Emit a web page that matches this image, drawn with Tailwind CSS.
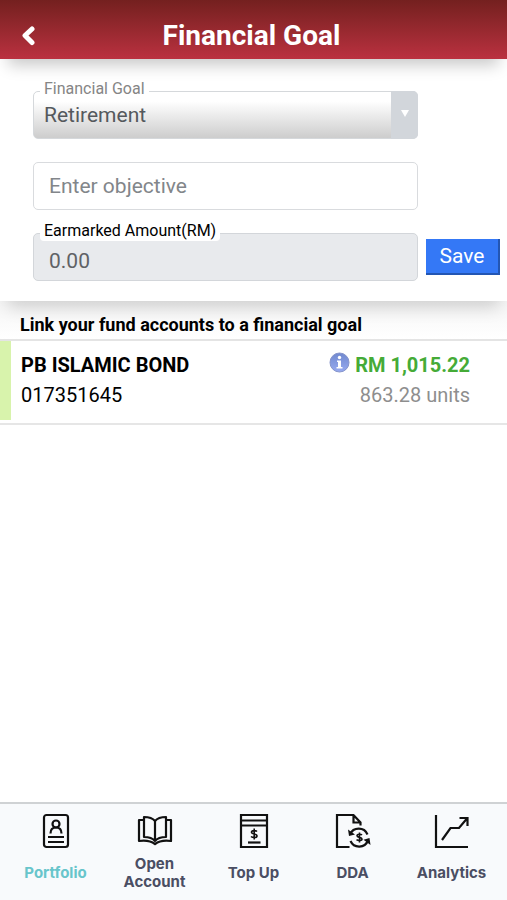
<!DOCTYPE html>
<html lang="en">
<head>
  <meta charset="UTF-8" />
  <meta name="viewport" content="width=device-width, initial-scale=1.0" />
  <title>Financial Goal</title>
  <script src="https://cdn.jsdelivr.net/npm/@tailwindcss/browser@4"></script>
</head>
<body class="min-h-screen flex flex-col bg-white text-black font-['Roboto',sans-serif]">
  <header class="relative z-20 h-[59px] grid grid-cols-[56px_1fr_60px] items-center pt-3 bg-linear-to-b from-[#74201f] to-[#bb3140] shadow-[0_14px_16px_-8px_rgba(0,0,0,0.22)]">
    <button type="button" aria-label="Back" class="flex justify-center">
      <svg class="w-5 h-5" viewBox="0 0 20 20" fill="none" stroke="#fff" stroke-width="5" stroke-linecap="round" stroke-linejoin="round"><path d="M14 3 7 9.500l7 7" /></svg>
    </button>
    <h1 class="text-[28px] leading-8 font-bold text-white text-center">Financial Goal</h1>
  </header>

  <form class="relative z-10 grid grid-cols-[1fr_74px] gap-x-2 gap-y-[23px] pt-8 pb-5 pl-[33px] pr-[7px] bg-white shadow-[0_14px_16px_-8px_rgba(0,0,0,0.16)]">
    <div class="relative col-start-1">
      <label for="goal" class="absolute left-[7px] -top-3 px-1 bg-white rounded text-base leading-5 text-[#858585]">Financial Goal</label>
      <select id="goal" class="block appearance-none w-full h-12 pl-[10px] pr-9 pt-[2px] border border-[#d5d8db] rounded-[5px] bg-linear-to-b from-white from-20% to-[#cdcdcd] text-[21px] text-[#55595d]">
        <option>Retirement</option>
      </select>
      <span class="absolute right-0 inset-y-0 w-[27px] flex items-center justify-center pb-1 rounded-r-[5px] bg-[#d2d6db] pointer-events-none">
        <svg class="w-2 h-2" viewBox="0 0 8 8" fill="#fff"><path d="M0 1h8L4 8z" /></svg>
      </span>
    </div>

    <input type="text" placeholder="Enter objective" aria-label="Objective" class="col-start-1 w-full h-12 px-[15px] border border-[#d9dbde] rounded-[5px] text-[21px] text-[#55595d] placeholder:text-[#82868a]" />

    <div class="relative col-start-1">
      <label for="amount" class="absolute left-[7px] -top-3 px-1 bg-white rounded text-base leading-5">Earmarked Amount(RM)</label>
      <input id="amount" type="text" value="0.00" readonly class="block w-full h-12 px-[15px] pt-2 border border-[#d3d6da] rounded-[5px] bg-[#e8eaed] text-[21px] text-[#5f6266]" />
    </div>
    <button type="submit" class="self-center h-9 border-r-2 border-b-2 border-[#2356b3] bg-[#3478f6] text-[21px] leading-none text-white">Save</button>
  </form>

  <main class="grow">
    <h2 class="h-10 pt-3 pl-5 border-b-2 border-[#e4e4e4] bg-linear-to-b from-[#f5f5f5] to-white text-lg leading-6 font-bold">Link your fund accounts to a financial goal</h2>
    <div class="flex justify-between border-b-2 border-[#e6e6e6] pb-[3px] text-[20px] leading-[30px]">
      <div class="h-[79px] pt-[9px] pl-[10px] border-l-[11px] border-[#d8f3ac]">
        <p class="font-bold">PB ISLAMIC BOND</p>
        <p>017351645</p>
      </div>
      <div class="pt-[9px] pr-[37px] text-right">
        <p class="flex items-center gap-[5px] font-bold text-[#45ab37]">
          <svg class="w-[21px] h-[21px] mb-[6px]" viewBox="0 0 21 21">
            <defs>
              <linearGradient id="info" x1="0" y1="0" x2="0" y2="1"><stop offset="0" stop-color="#7089cf" /><stop offset="1" stop-color="#97aaf0" /></linearGradient>
            </defs>
            <circle cx="10.500" cy="10.500" r="9.500" fill="url(#info)" stroke="#8493cb" />
            <circle cx="10.500" cy="5.500" r="1.700" fill="#fff" />
            <path d="M8 8.500h4v6.500h1.500v1.500h-6V15H9v-5H8z" fill="#fff" />
          </svg>
          RM 1,015.22
        </p>
        <p class="text-[#8e8e8e]">863.28 units</p>
      </div>
    </div>
  </main>

  <nav class="h-[98px] grid grid-cols-5 px-[6px] border-t-2 border-[#cfd2d4] bg-[#f8fafc] font-['Inter',sans-serif] text-[15px] leading-[18px] font-bold text-[#4a4e63] text-center">
    <a href="#" class="flex flex-col items-center pt-[9px] text-[#68c5cb]">
      <svg class="w-9 h-9" viewBox="0 0 36 36" fill="none" stroke="#111" stroke-width="2.200">
        <rect x="6" y="2" width="24" height="32" rx="2.500" />
        <circle cx="18" cy="11" r="3.500" />
        <path d="M12.500 20.500c0-4 2-6 5.500-6s5.500 2 5.500 6M10 24h16M10 29h16" />
      </svg>
      <span class="h-12 flex items-center">Portfolio</span>
    </a>
    <a href="#" class="flex flex-col items-center pt-[9px]">
      <svg class="w-9 h-9" viewBox="0 0 36 36" fill="none" stroke="#111" stroke-width="2.200" stroke-linejoin="round">
        <path d="M18 8c-2.500-3-6.500-4-11-4v20c4.500 0 8.500 1 11 4 2.500-3 6.500-4 11-4V4c-4.500 0-8.500 1-11 4zM18 8v20" />
        <path d="M7 7H2v21c7-1 12 0 16 3 4-3 9-4 16-3V7h-5" />
      </svg>
      <span class="h-12 flex items-center">Open<br />Account</span>
    </a>
    <a href="#" class="flex flex-col items-center pt-[9px]">
      <svg class="w-9 h-9" viewBox="0 0 36 36" fill="none" stroke="#111" stroke-width="2.200">
        <path d="M5 2h26v32H5zM5 7.500h26M5 12.500h26" />
        <path d="M21 18.500c-1-1-5.500-1.500-5.500.8 0 2.200 5.500 1.200 5.500 3.600 0 2.200-4.500 1.900-6 .6M18.200 15.500v11" stroke-width="1.600" />
        <path d="M12 29.500h12.500" />
      </svg>
      <span class="h-12 flex items-center">Top Up</span>
    </a>
    <a href="#" class="flex flex-col items-center pt-[9px]">
      <svg class="w-9 h-9" viewBox="0 0 36 36" fill="none" stroke="#111" stroke-width="2.200">
        <path d="M14.500 34H2V2h16.500l7 7.500v3M18.500 2v7.500h7" />
        <path d="M15 21.500a9.500 9.500 0 0 1 17.500 0M33 27.500a9.500 9.500 0 0 1-17.500.5" />
        <path d="m13 16.500 1 6.500 6-1.500zM35.500 32l-1-7-6 1.800z" fill="#111" stroke="none" />
        <path d="M27 22c-1-1-5-1.200-5 .8 0 2 5 1.100 5 3.300 0 2-4 1.800-5.500.6M24.500 19.500v10" stroke-width="1.600" />
      </svg>
      <span class="h-12 flex items-center">DDA</span>
    </a>
    <a href="#" class="flex flex-col items-center pt-[9px]">
      <svg class="w-9 h-9" viewBox="0 0 36 36" fill="none" stroke="#111" stroke-width="2.200">
        <path d="M2 2v32h32M8 27l8.500-12H25l8-9.500M25.500 5H33.500v8" />
      </svg>
      <span class="h-12 flex items-center">Analytics</span>
    </a>
  </nav>
</body>
</html>
